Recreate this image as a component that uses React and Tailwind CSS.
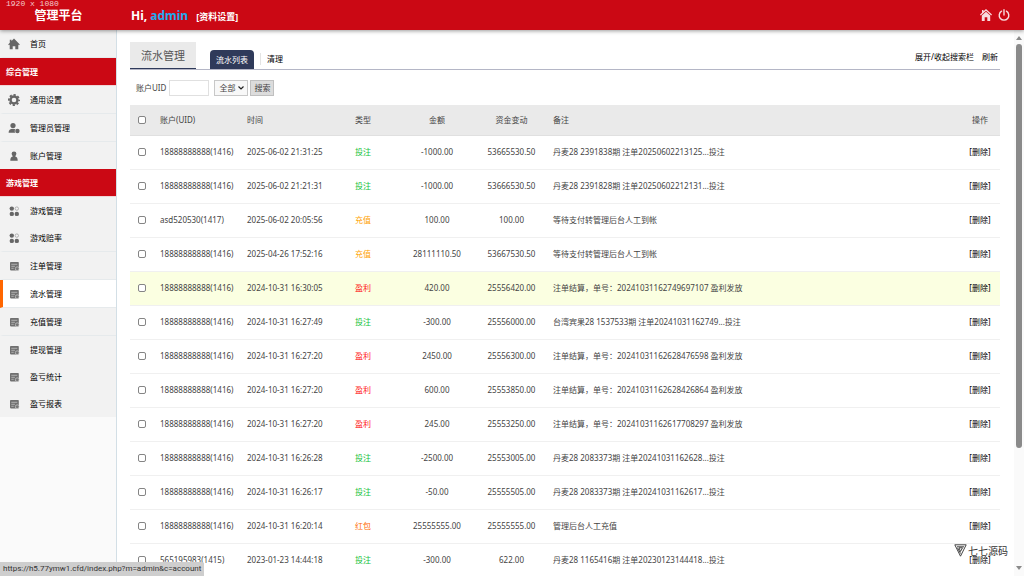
import React, { useState } from "react";

function HomeIcon() {
  return (
    <svg viewBox="0 0 12 12" className="size-3" fill="#666">
      <path d="M6 .6 11.800 6.400 11 7.200 10.300 6.600V11.200H7.300V8.200H4.700v3H1.700V6.600l-.7.6L.2 6.400 1.800 4.800V1.800h1.700v1.300z" />
    </svg>
  );
}

function GearIcon() {
  return (
    <svg viewBox="0 0 12 12" className="size-3" fill="none" stroke="#666">
      <circle cx="6" cy="6" r="3.500" strokeWidth="2.400" />
      <circle cx="6" cy="6" r="5.100" strokeWidth="1.800" strokeDasharray="2.200 1.805" strokeDashoffset="1.100" />
    </svg>
  );
}

function UsersIcon() {
  return (
    <svg viewBox="0 0 12 12" className="size-3" fill="#666">
      <circle cx="5" cy="3.500" r="2.600" />
      <path d="M.6 10.800c0-2.700 1.500-4 4.400-4 1 0 1.800.2 2.400.5-.8 1-.9 2.300-.2 3.500z" />
      <circle cx="9.400" cy="9" r="2.200" />
    </svg>
  );
}

function UserIcon() {
  return (
    <svg viewBox="0 0 12 12" className="size-3" fill="#666">
      <circle cx="6" cy="3.800" r="2.400" />
      <path d="M4.800 5h2.400l.3 1.700c1.400.3 2.200 1.300 2.200 4H2.300c0-2.700.8-3.700 2.200-4z" />
    </svg>
  );
}

function DotsIcon() {
  return (
    <svg viewBox="0 0 12 12" className="size-3" fill="#666">
      <circle cx="3.800" cy="3.600" r="2.200" />
      <circle cx="8.800" cy="3.600" r="1.700" fill="none" stroke="#999" strokeWidth=".7" />
      <circle cx="3.800" cy="8.900" r="2.200" />
      <circle cx="8.800" cy="8.900" r="2.200" />
    </svg>
  );
}

function ListIcon() {
  return (
    <svg viewBox="0 0 12 12" className="size-3">
      <path d="M2.800 2h7.200a.8.8 0 0 1 .8.8V9.600a.8.8 0 0 1-.8.8H2.800a.8.8 0 0 1-.8-.8V2.800a.8.8 0 0 1 .8-.8z" fill="#707070" />
      <path d="M3.300 4.300h6M3.300 6.300h3.600M3.300 8.300h2.400" stroke="#ccc" strokeWidth=".7" />
      <circle cx="9.200" cy="8.700" r="1.900" fill="#777" stroke="#ddd" strokeWidth=".6" />
    </svg>
  );
}

const NAV = [
  { label: "首页", Icon: HomeIcon, line: true },
  { label: "综合管理", group: true },
  { label: "通用设置", Icon: GearIcon, line: true },
  { label: "管理员管理", Icon: UsersIcon, line: true },
  { label: "账户管理", Icon: UserIcon },
  { label: "游戏管理", group: true },
  { label: "游戏管理", Icon: DotsIcon },
  { label: "游戏赔率", Icon: DotsIcon, line: true },
  { label: "注单管理", Icon: ListIcon, line: true },
  { label: "流水管理", Icon: ListIcon, line: true, active: true },
  { label: "充值管理", Icon: ListIcon, line: true },
  { label: "提现管理", Icon: ListIcon },
  { label: "盈亏统计", Icon: ListIcon },
  { label: "盈亏报表", Icon: ListIcon },
];

const MAIN_USER = "18888888888(1416)";

const ROWS = [
  [MAIN_USER, "2025-06-02 21:31:25", "投注", "-1000.00", "53665530.50", "丹麦28 2391838期 注单20250602213125...投注"],
  [MAIN_USER, "2025-06-02 21:21:31", "投注", "-1000.00", "53666530.50", "丹麦28 2391828期 注单20250602212131...投注"],
  ["asd520530(1417)", "2025-06-02 20:05:56", "充值", "100.00", "100.00", "等待支付转管理后台人工到帐"],
  [MAIN_USER, "2025-04-26 17:52:16", "充值", "28111110.50", "53667530.50", "等待支付转管理后台人工到帐"],
  [MAIN_USER, "2024-10-31 16:30:05", "盈利", "420.00", "25556420.00", "注单结算，单号：20241031162749697107 盈利发放"],
  [MAIN_USER, "2024-10-31 16:27:49", "投注", "-300.00", "25556000.00", "台湾宾果28 1537533期 注单20241031162749...投注"],
  [MAIN_USER, "2024-10-31 16:27:20", "盈利", "2450.00", "25556300.00", "注单结算，单号：20241031162628476598 盈利发放"],
  [MAIN_USER, "2024-10-31 16:27:20", "盈利", "600.00", "25553850.00", "注单结算，单号：20241031162628426864 盈利发放"],
  [MAIN_USER, "2024-10-31 16:27:20", "盈利", "245.00", "25553250.00", "注单结算，单号：20241031162617708297 盈利发放"],
  [MAIN_USER, "2024-10-31 16:26:28", "投注", "-2500.00", "25553005.00", "丹麦28 2083373期 注单20241031162628...投注"],
  [MAIN_USER, "2024-10-31 16:26:17", "投注", "-50.00", "25555505.00", "丹麦28 2083373期 注单20241031162617...投注"],
  [MAIN_USER, "2024-10-31 16:20:14", "红包", "25555555.00", "25555555.00", "管理后台人工充值"],
  ["565195983(1415)", "2023-01-23 14:44:18", "投注", "-300.00", "622.00", "丹麦28 1165416期 注单20230123144418...投注"],
];

const TYPE_COLORS = {
  投注: "text-[#14c23a]",
  充值: "text-[#ffa200]",
  盈利: "text-[#ff1a1a]",
  红包: "text-[#ff6a00]",
};

function Header() {
  return (
    <header className="relative z-10 flex h-[30px] shrink-0 items-center bg-[#cb0814] text-white shadow-[0_1px_4px_rgba(0,0,0,0.4)]">
      <span className="absolute top-0 left-1.5 font-['Liberation_Mono',monospace] text-[8px] leading-2 text-[#f3c9cc]">1920 x 1080</span>
      <h1 className="w-[117px] pt-0.5 text-center text-[12px] leading-4 font-bold">管理平台</h1>
      <p className="flex items-center gap-2 pt-px pl-[14px] text-[12px] leading-4 font-bold">
        <span>
          Hi, <span className="text-[#1eaaf1]">admin</span>
        </span>
        <a href="#profile" className="pt-0.5 text-[9px]">[资料设置]</a>
      </p>
      <div className="ml-auto flex items-center gap-1.5 pr-[14px]">
        <a href="#home" aria-label="首页">
          <svg viewBox="0 0 12 12" className="size-3" fill="#f8dcde">
            <path d="M6 0 12 5.600 11.200 6.500 6 1.700.8 6.500 0 5.600 2 3.700V1h1.500v1.300z" />
            <path d="M6 2.700 10.200 6.500V12H7.300V8.300H4.700V12H1.800V6.500z" />
          </svg>
        </a>
        <a href="#logout" aria-label="退出">
          <svg viewBox="0 0 12 12" className="size-3" fill="none" stroke="#f8dcde" strokeWidth="1.400" strokeLinecap="round">
            <path d="M3.600 2.200a4.800 4.800 0 1 0 4.800 0M6 .8V6" />
          </svg>
        </a>
      </div>
    </header>
  );
}

function Sidebar() {
  return (
    <nav className="w-[117px] shrink-0 border-r border-[#d3dfe6] bg-[#fafafa] text-[8px] leading-3">
      {NAV.map(({ label, Icon, group, line, active }, i) =>
        group ? (
          <h2 key={i} className="flex h-7 items-center border-b border-[#f0d5d7] bg-[#cb0814] pl-1.5 font-bold text-white">
            {label}
          </h2>
        ) : (
          <a
            key={i}
            href="#nav"
            className={`flex items-center gap-2.5 border-l-[3px] pl-[5px] text-black ${line ? "h-7 border-b border-b-[#e6eaec]" : "h-[27px]"} ${
              active ? "border-l-[#ff6600] bg-white" : "border-l-[#f2f2f2] bg-[#f2f2f2]"
            }`}
          >
            <Icon />
            {label}
          </a>
        )
      )}
    </nav>
  );
}

function Check({ label }) {
  return (
    <input
      type="checkbox"
      aria-label={label}
      className="block size-2 appearance-none rounded-[2px] border border-[#858585] bg-white checked:bg-[#2f3a5a]"
    />
  );
}

function Tabs() {
  return (
    <div className="flex items-end border-b border-[#b4b6c6] text-[8px] leading-3">
      <h2 className="flex h-[27px] items-center self-start border-b border-[#2f3a5a] bg-[#eaeaea] px-[11px] pt-px text-[11px] text-[#555]">流水管理</h2>
      <a href="#list" className="mt-2 ml-[14px] flex h-[19px] items-center rounded-t-[4px] bg-[#2f3a5a] px-1.5 text-white">
        流水列表
      </a>
      <a href="#clear" className="mb-1 ml-1.5 border-l border-[#e4e4e4] pl-1.5 text-black">清理</a>
      <div className="mb-1.5 ml-auto flex gap-2 pr-0.5 text-black">
        <button type="button">展开/收起搜索栏</button>
        <button type="button">刷新</button>
      </div>
    </div>
  );
}

function SearchBar() {
  const [uid, setUid] = useState("");
  return (
    <form className="flex h-[35px] items-center pl-1.5 text-[8px] leading-3 text-[#444]" onSubmit={(e) => e.preventDefault()}>
      <label htmlFor="uid" className="mr-[3px]">账户UID</label>
      <input
        id="uid"
        value={uid}
        onChange={(e) => setUid(e.target.value)}
        className="h-4 w-10 border border-[#e0e0e0] bg-white px-0.5 outline-none"
      />
      <div className="relative ml-[5px]">
        <select aria-label="类型" className="block h-4 w-[34px] appearance-none border border-[#c8c8c8] bg-[#f8f8f8] pl-1 outline-none">
          <option>全部</option>
          <option>投注</option>
          <option>充值</option>
          <option>盈利</option>
          <option>红包</option>
        </select>
        <svg viewBox="0 0 6 4" className="pointer-events-none absolute top-1.5 right-1 h-1 w-1.5" fill="none" stroke="#222" strokeWidth="1.200">
          <path d="M.5.5 3 3 5.500.5" />
        </svg>
      </div>
      <button type="submit" className="ml-0.5 h-4 border border-[#c0c0c0] bg-[#dcdcdc] px-[3px]">搜索</button>
    </form>
  );
}

function Records() {
  return (
    <table className="w-full table-fixed border-collapse text-left text-[8px] leading-3 text-[#444]">
      <thead>
        <tr className="h-[30px] border-b border-[#e0e0e0] bg-[#eaeaea] *:font-normal">
          <th className="w-[30px] pl-2"><Check label="全选" /></th>
          <th className="w-[87px]">账户(UID)</th>
          <th className="w-[87px]">时间</th>
          <th className="w-[58px] text-center">类型</th>
          <th className="w-[90px] text-center">金额</th>
          <th className="w-[59px] text-center">资金变动</th>
          <th className="pl-3">备注</th>
          <th className="w-10 text-center">操作</th>
        </tr>
      </thead>
      <tbody>
        {ROWS.map(([user, time, type, amount, balance, note], i) => (
          <tr key={i} className={`h-[34px] border-b border-[#f0f0f0] ${i === 4 ? "bg-[#fbffe1]" : ""}`}>
            <td className="pl-2"><Check label={`选择 ${user} ${time}`} /></td>
            <td>{user}</td>
            <td>{time}</td>
            <td className={`text-center ${TYPE_COLORS[type]}`}>{type}</td>
            <td className="text-center">{amount}</td>
            <td className="text-center">{balance}</td>
            <td className="truncate pl-3">{note}</td>
            <td className="text-center"><button type="button" className="text-black">[删除]</button></td>
          </tr>
        ))}
      </tbody>
    </table>
  );
}

function ScrollBar() {
  return (
    <div className="flex w-2.5 shrink-0 flex-col items-center bg-[#fafafa] pt-1.5 pb-1.5" aria-hidden="true">
      <svg viewBox="0 0 6 4" className="h-1 w-1.5 shrink-0" fill="#8a8a8a"><path d="M3 0 6 4H0z" /></svg>
      <div className="my-1 min-h-0 flex-1">
        <div className="h-[78%] w-1.5 rounded-full bg-[#8a8a8a]" />
      </div>
      <svg viewBox="0 0 6 4" className="h-1 w-1.5 shrink-0" fill="#8a8a8a"><path d="M0 0h6L3 4z" /></svg>
    </div>
  );
}

function Watermark() {
  return (
    <div className="absolute right-4 bottom-[19px] flex items-center gap-px text-[#333]">
      <svg viewBox="0 0 13 13" className="size-[13px]" fill="none" stroke="#444" strokeWidth="1">
        <path d="M.8.800h11.400L6.500 12.200z M3 2.800h7M6.500 9.500 3.500 3.800M6.500 7.500l2-3.700H5z" />
      </svg>
      <span className="text-[10px] leading-3">七七源码</span>
    </div>
  );
}

export default function App() {
  return (
    <div className="relative flex h-screen flex-col overflow-hidden bg-white font-['Noto_Sans','Noto_Sans_CJK_SC',sans-serif]">
      <Header />
      <div className="flex min-h-0 flex-1">
        <Sidebar />
        <main className="min-w-0 flex-1 overflow-hidden pt-3 pr-[14px] pl-[13px]">
          <Tabs />
          <SearchBar />
          <Records />
        </main>
        <ScrollBar />
      </div>
      <div className="absolute bottom-0 left-0 rounded-tr-[2px] bg-[#cecece] px-[3px] py-px font-['Roboto',sans-serif] text-[8px] leading-3 text-[#333]">
        https://h5.77ymw1.cfd/index.php?m=admin&amp;c=account
      </div>
      <Watermark />
    </div>
  );
}
